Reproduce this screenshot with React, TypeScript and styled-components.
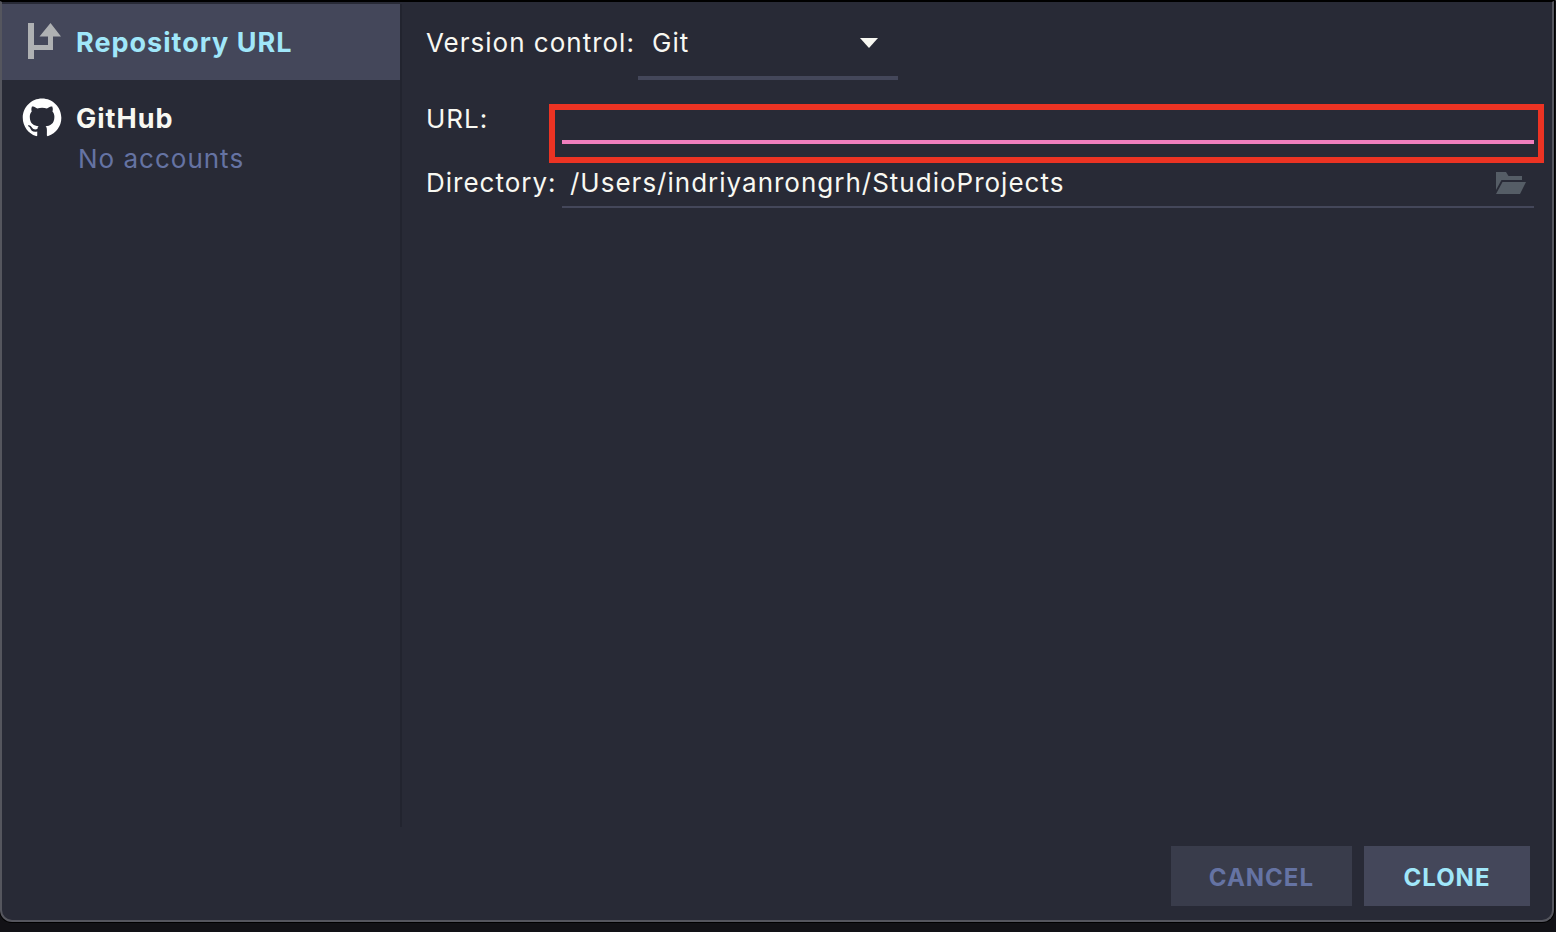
import React from "react";
import styled, { createGlobalStyle } from "styled-components";

const colors = {
  panel: "#282a36",
  raised: "#44475a",
  muted: "#393c4b",
  text: "#f8f8f2",
  accent: "#a0e7fa",
  comment: "#6573a3",
  pink: "#ef7ebd",
  marker: "#ec3323",
  edge: "#55565e",
  divider: "#22242f",
};

const GlobalStyle = createGlobalStyle`
  *, *::before, *::after { box-sizing: border-box; }
  html { background: #121216; }
  body {
    margin: 0;
    color: ${colors.text};
    font-family: Inter, "Liberation Sans", sans-serif;
    font-size: 26px;
    line-height: 40px;
    letter-spacing: 1px;
  }
  button, input, select { font: inherit; letter-spacing: inherit; color: inherit; margin: 0; }
`;

const Screen = styled.div`
  min-height: 100vh;
  display: flex;
  flex-direction: column;
  border-top: 1px solid #2f2f31;
  padding: 0 2px 10px 0;
`;

const Dialog = styled.main`
  flex: 1;
  display: flex;
  flex-direction: column;
  background: ${colors.panel};
  border: 2px solid ${colors.edge};
  border-top: 1px solid #000;
  border-radius: 0 0 12px 12px;
  box-shadow: 0 0 0 1px #000;
`;

const Content = styled.div`
  flex: 1;
  display: grid;
  grid-template-columns: 400px 1fr;
  padding-top: 2px;
`;

const Sidebar = styled.nav`
  border-right: 2px solid ${colors.divider};
`;

const SidebarItem = styled.button<{ $selected?: boolean }>`
  width: 100%;
  display: grid;
  grid-template-columns: 40px 1fr;
  column-gap: 14px;
  align-items: center;
  padding: 18px 20px;
  border: 0;
  text-align: left;
  line-height: 42px;
  cursor: pointer;
  background: ${(p) => (p.$selected ? colors.raised : "transparent")};
  color: ${(p) => (p.$selected ? colors.accent : colors.text)};
`;

const ItemTitle = styled.span`
  height: 40px;
  font-size: 27px;
  font-weight: 700;
`;

const ItemNote = styled.span`
  grid-column: 2;
  padding-left: 2px;
  color: ${colors.comment};
`;

const Form = styled.form`
  display: flex;
  flex-direction: column;
  gap: 16px;
  padding: 0 18px 0 24px;
`;

const ControlRow = styled.div`
  display: grid;
  grid-template-columns: 204px 260px;
  grid-template-rows: 76px;
  gap: 8px;
`;

const FieldRow = styled.div`
  display: grid;
  grid-template-columns: 128px 1fr;
  grid-template-rows: 48px;
  gap: 8px;
`;

const Label = styled.label<{ $tall?: boolean }>`
  line-height: ${(p) => (p.$tall ? "78px" : "46px")};
  white-space: nowrap;
`;

const SelectBox = styled.div`
  position: relative;
  border-bottom: 4px solid ${colors.raised};
`;

const Select = styled.select`
  width: 100%;
  height: 100%;
  appearance: none;
  padding: 6px 40px 0 14px;
  border: 0;
  outline: 0;
  background: transparent;
`;

const Arrow = styled.svg`
  position: absolute;
  right: 20px;
  top: 34px;
  pointer-events: none;
`;

const Field = styled.div<{ $active?: boolean }>`
  position: relative;
  display: flex;
  align-items: center;
  border-bottom: ${(p) => (p.$active ? `4px solid ${colors.pink}` : `2px solid ${colors.raised}`)};
`;

const Marker = styled.div`
  position: absolute;
  inset: 8px -10px -23px -13px;
  border: 6px solid ${colors.marker};
  pointer-events: none;
`;

const TextInput = styled.input`
  flex: 1;
  min-width: 0;
  height: 100%;
  padding: 0 8px 2px;
  border: 0;
  outline: 0;
  background: transparent;
`;

const BrowseButton = styled.button`
  display: flex;
  padding: 0 8px 0 0;
  border: 0;
  background: transparent;
  cursor: pointer;
`;

const Footer = styled.footer`
  display: flex;
  justify-content: flex-end;
  gap: 12px;
  padding: 19px 22px 14px;
`;

const ActionButton = styled.button<{ $primary?: boolean }>`
  height: 60px;
  min-width: 166px;
  padding: 4px 38px 0;
  border: 0;
  font-size: 24px;
  font-weight: 700;
  cursor: pointer;
  background: ${(p) => (p.$primary ? colors.raised : colors.muted)};
  color: ${(p) => (p.$primary ? colors.accent : colors.comment)};
`;

const BranchIcon = () => (
  <svg width="40" height="40" viewBox="0 0 40 40" fill="#afb1b3" aria-hidden="true">
    <path d="M6 1H12V37H6Z" />
    <path d="M28.500 1L39 14.500H31V28H12V23H26V14.500H17.500Z" />
  </svg>
);

const GitHubIcon = () => (
  <svg width="40" height="40" viewBox="0 0 16 16" fill="#fff" aria-hidden="true">
    <path
      transform="translate(0.300 0.200) scale(0.965)"
      d="M8 0C3.580 0 0 3.580 0 8c0 3.540 2.290 6.530 5.470 7.590.4.070.55-.17.55-.38 0-.19-.01-.82-.01-1.490-2.010.37-2.530-.49-2.690-.94-.09-.23-.48-.94-.82-1.130-.28-.15-.68-.52-.01-.53.63-.01 1.080.58 1.230.82.72 1.210 1.870.87 2.330.66.07-.52.28-.87.51-1.070-1.780-.2-3.640-.89-3.640-3.950 0-.87.31-1.590.82-2.150-.08-.2-.36-1.020.08-2.120 0 0 .67-.21 2.200.82.64-.18 1.320-.27 2-.27s1.360.09 2 .27c1.530-1.040 2.200-.82 2.200-.82.44 1.100.16 1.920.08 2.120.51.56.82 1.270.82 2.150 0 3.070-1.870 3.750-3.650 3.950.29.25.54.73.54 1.480 0 1.070-.01 1.930-.01 2.200 0 .21.15.46.55.38A8.010 8.010 0 0 0 16 8c0-4.420-3.580-8-8-8Z"
    />
  </svg>
);

const FolderIcon = () => (
  <svg width="30" height="22" viewBox="0 0 30 22" fill="#555d66" aria-hidden="true">
    <path d="M0 0H10L12.500 4H26V8H5.500L0 18Z" />
    <path d="M6.500 10H30L24 22H0Z" />
  </svg>
);

export default function App() {
  return (
    <>
      <GlobalStyle />
      <Screen>
        <Dialog>
          <Content>
            <Sidebar>
              <SidebarItem type="button" $selected>
                <BranchIcon />
                <ItemTitle>Repository URL</ItemTitle>
              </SidebarItem>
              <SidebarItem type="button">
                <GitHubIcon />
                <ItemTitle>GitHub</ItemTitle>
                <ItemNote>No accounts</ItemNote>
              </SidebarItem>
            </Sidebar>
            <Form id="clone-form" onSubmit={(e) => e.preventDefault()}>
              <ControlRow>
                <Label htmlFor="vcs" $tall>Version control:</Label>
                <SelectBox>
                  <Select id="vcs" defaultValue="Git">
                    <option>Git</option>
                  </Select>
                  <Arrow width="18" height="10" viewBox="0 0 18 10" fill={colors.text} aria-hidden="true">
                    <path d="M0 0H18L9 10Z" />
                  </Arrow>
                </SelectBox>
              </ControlRow>
              <FieldRow>
                <Label htmlFor="url">URL:</Label>
                <Field $active>
                  <TextInput id="url" type="text" />
                  <Marker />
                </Field>
              </FieldRow>
              <FieldRow>
                <Label htmlFor="directory">Directory:</Label>
                <Field>
                  <TextInput id="directory" type="text" defaultValue="/Users/indriyanrongrh/StudioProjects" />
                  <BrowseButton type="button" aria-label="Browse">
                    <FolderIcon />
                  </BrowseButton>
                </Field>
              </FieldRow>
            </Form>
          </Content>
          <Footer>
            <ActionButton type="button">CANCEL</ActionButton>
            <ActionButton type="submit" form="clone-form" $primary>CLONE</ActionButton>
          </Footer>
        </Dialog>
      </Screen>
    </>
  );
}
